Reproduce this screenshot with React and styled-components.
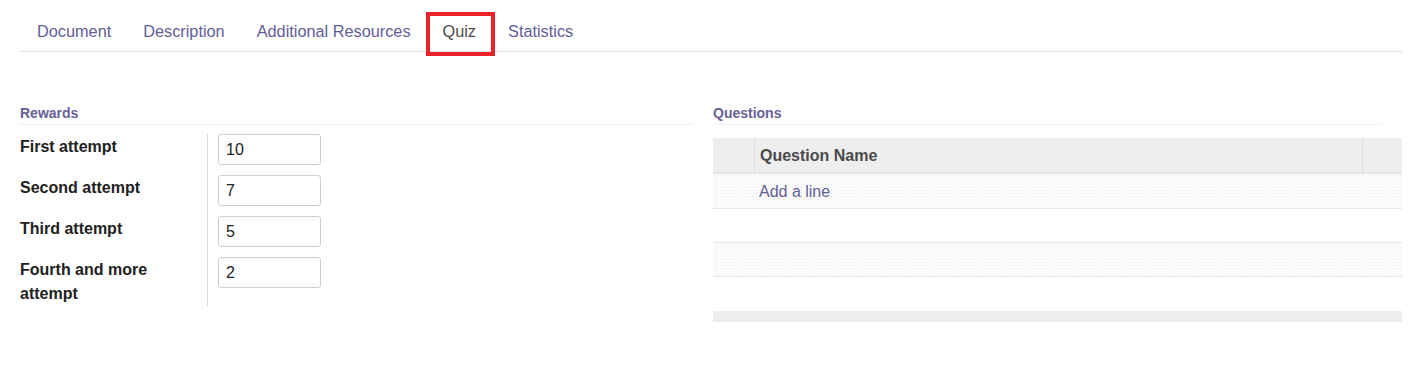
import React from "react";
import styled, { createGlobalStyle } from "styled-components";

const Global = createGlobalStyle`
  html, body { margin: 0; padding: 0; background: #ffffff; }
  body { font-family: "Liberation Sans", Arial, sans-serif; color: #212529; }
  * { box-sizing: border-box; }
`;

const Page = styled.div`
  padding: 12px 7px 0 20px;
  width: 1409px;
`;

const TabNav = styled.nav`
  display: flex;
  border-bottom: 1px solid #dee2e6;
  padding-left: 1px;
`;

const Tab = styled.a`
  position: relative;
  display: block;
  padding: 10px 16px;
  font-size: 16.3px;
  line-height: 19px;
  color: ${(p) => (p.$active ? "#4c4c4c" : "#625d97")};
  cursor: pointer;
  white-space: nowrap;

  ${(p) =>
    p.$active &&
    `
    &::after {
      content: "";
      position: absolute;
      top: 0;
      left: -1px;
      right: -3px;
      bottom: -5px;
      border: 4px solid #e8212b;
    }
  `}
`;

const Sheet = styled.div`
  display: grid;
  grid-template-columns: 672px 689px;
  column-gap: 21px;
  margin-top: 51px;
`;

const Group = styled.section`
  display: flex;
  flex-direction: column;
`;

const GroupTitle = styled.div`
  font-size: 14px;
  font-weight: bold;
  line-height: 20px;
  padding-bottom: 1px;
  color: #695f98;
  border-bottom: 1px solid #f0f0f0;
  margin-right: ${(p) => p.$inset || 0}px;
`;

const FieldTable = styled.div`
  display: grid;
  grid-template-columns: 187px 1fr;
  margin-top: 9px;
`;

const Label = styled.div`
  font-size: 16px;
  font-weight: bold;
  line-height: 24px;
  color: #212121;
  padding-top: 1px;
  padding-right: 20px;
  padding-bottom: ${(p) => (p.$last ? 0 : 9)}px;
`;

const FieldCell = styled.div`
  border-left: 1px solid #dcdcdc;
  padding-left: 10px;
  padding-bottom: ${(p) => (p.$last ? 0 : 10)}px;
`;

const NumInput = styled.div`
  width: 103px;
  height: 31px;
  border: 1px solid #cfcfcf;
  border-radius: 3px;
  padding: 0 7px;
  font-size: 16px;
  line-height: 30px;
  color: #212121;
`;

const Table = styled.div`
  margin-top: 13px;
  display: flex;
  flex-direction: column;
`;

const HeadRow = styled.div`
  display: grid;
  grid-template-columns: 41px 1fr 40px;
  height: 36px;
  background: #eeeeee;
  border-bottom: 2px solid #e3e6ea;
`;

const HeadCell = styled.div`
  border-left: ${(p) => (p.$sep ? "1px solid #dddddd" : "none")};
  padding-left: 5px;
  font-size: 16px;
  font-weight: bold;
  line-height: 35px;
  color: #4a4a4a;
`;

const BodyRow = styled.div`
  display: grid;
  grid-template-columns: 46px 1fr;
  height: ${(p) => p.$h}px;
  background: ${(p) =>
    p.$striped
      ? "radial-gradient(circle, #efefef 0.6px, transparent 0.7px) 0 0 / 3px 3px, #fbfbfb"
      : "#ffffff"};
  border-bottom: ${(p) => (p.$plain ? "none" : "1px solid #e6e6e6")};
`;

const AddLine = styled.a`
  grid-column: 2;
  font-size: 16px;
  line-height: 34px;
  padding-top: 1px;
  color: #625d97;
  cursor: pointer;
`;

const TableFoot = styled.div`
  height: 11px;
  background: #eeeeee;
`;

const rewards = [
  { label: "First attempt", value: "10" },
  { label: "Second attempt", value: "7" },
  { label: "Third attempt", value: "5" },
  { label: "Fourth and more attempt", value: "2" },
];

export default function App() {
  return (
    <>
      <Global />
      <Page>
        <TabNav>
          <Tab>Document</Tab>
          <Tab>Description</Tab>
          <Tab>Additional Resources</Tab>
          <Tab $active>Quiz</Tab>
          <Tab>Statistics</Tab>
        </TabNav>

        <Sheet>
          <Group>
            <GroupTitle>Rewards</GroupTitle>
            <FieldTable>
              {rewards.map((r, i) => {
                const last = i === rewards.length - 1;
                return (
                  <React.Fragment key={r.label}>
                    <Label $last={last}>{r.label}</Label>
                    <FieldCell $last={last}>
                      <NumInput>{r.value}</NumInput>
                    </FieldCell>
                  </React.Fragment>
                );
              })}
            </FieldTable>
          </Group>

          <Group>
            <GroupTitle $inset={20}>Questions</GroupTitle>
            <Table>
              <HeadRow>
                <HeadCell />
                <HeadCell $sep>Question Name</HeadCell>
                <HeadCell $sep />
              </HeadRow>
              <BodyRow $striped $h={35}>
                <AddLine>Add a line</AddLine>
              </BodyRow>
              <BodyRow $h={34} />
              <BodyRow $striped $h={34} />
              <BodyRow $plain $h={34} />
              <TableFoot />
            </Table>
          </Group>
        </Sheet>
      </Page>
    </>
  );
}
